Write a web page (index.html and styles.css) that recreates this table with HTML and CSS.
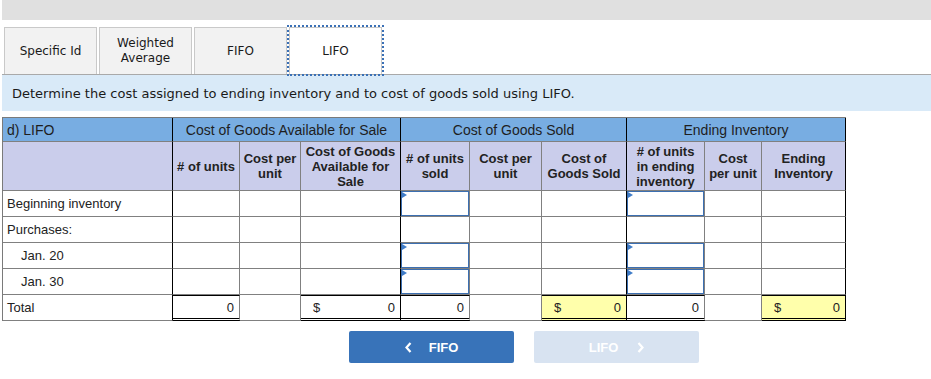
FILE: index.html
```html
<!DOCTYPE html>
<html lang="en">
<head>
<meta charset="utf-8">
<title>Inventory costing – LIFO</title>
<link rel="stylesheet" href="styles.css">
</head>
<body>
<div class="page">
  <div class="topbar"></div>

  <div class="tabs">
    <div class="tab">Specific Id</div>
    <div class="tab">Weighted<br>Average</div>
    <div class="tab">FIFO</div>
    <div class="tab active">LIFO</div>
  </div>

  <div class="prompt">Determine the cost assigned to ending inventory and to cost of goods sold using LIFO.</div>

  <table class="grid">
    <colgroup>
      <col class="c-label">
      <col class="c-67"><col class="c-61"><col class="c-100">
      <col class="c-69"><col class="c-72"><col class="c-85">
      <col class="c-78"><col class="c-57"><col class="c-84">
    </colgroup>
    <thead>
      <tr class="h1">
        <th class="lbl gend">d) LIFO</th>
        <th colspan="3" class="gend">Cost of Goods Available for Sale</th>
        <th colspan="3" class="gend">Cost of Goods Sold</th>
        <th colspan="3" class="gend">Ending Inventory</th>
      </tr>
      <tr class="h2">
        <th class="gend"></th>
        <th># of units</th>
        <th>Cost per<br>unit</th>
        <th class="gend">Cost of Goods<br>Available for<br>Sale</th>
        <th># of units<br>sold</th>
        <th>Cost per<br>unit</th>
        <th class="gend">Cost of<br>Goods Sold</th>
        <th># of units<br>in ending<br>inventory</th>
        <th>Cost<br>per unit</th>
        <th class="gend">Ending<br>Inventory</th>
      </tr>
    </thead>
    <tbody>
      <tr>
        <td class="lbl gend">Beginning inventory</td>
        <td></td><td></td><td class="gend"></td>
        <td class="ic"><div class="inp"></div></td><td></td><td class="gend"></td>
        <td class="ic"><div class="inp"></div></td><td></td><td class="gend"></td>
      </tr>
      <tr>
        <td class="lbl gend">Purchases:</td>
        <td></td><td></td><td class="gend"></td>
        <td></td><td></td><td class="gend"></td>
        <td></td><td></td><td class="gend"></td>
      </tr>
      <tr>
        <td class="lbl sub gend">Jan. 20</td>
        <td></td><td></td><td class="gend"></td>
        <td class="ic"><div class="inp"></div></td><td></td><td class="gend"></td>
        <td class="ic"><div class="inp"></div></td><td></td><td class="gend"></td>
      </tr>
      <tr>
        <td class="lbl sub gend">Jan. 30</td>
        <td></td><td></td><td class="gend"></td>
        <td class="ic"><div class="inp"></div></td><td></td><td class="gend"></td>
        <td class="ic"><div class="inp"></div></td><td></td><td class="gend"></td>
      </tr>
      <tr class="total">
        <td class="lbl gend">Total</td>
        <td class="val num">0</td>
        <td></td>
        <td class="val gend"><span class="money"><span>$</span><span>0</span></span></td>
        <td class="val num">0</td>
        <td></td>
        <td class="val hl gend"><span class="money"><span>$</span><span>0</span></span></td>
        <td class="val num">0</td>
        <td></td>
        <td class="val hl gend"><span class="money"><span>$</span><span>0</span></span></td>
      </tr>
    </tbody>
  </table>

  <div class="nav">
    <button class="btn prev" type="button">
      <svg class="chev" width="7" height="11" viewBox="0 0 7 11"><polyline points="5.5,1 1.5,5.5 5.5,10" fill="none" stroke="#fff" stroke-width="2.2"/></svg>
      <span>FIFO</span>
    </button>
    <button class="btn next" type="button" disabled>
      <span>LIFO</span>
      <svg class="chev" width="7" height="11" viewBox="0 0 7 11"><polyline points="1.5,1 5.5,5.5 1.5,10" fill="none" stroke="#fff" stroke-width="2.2"/></svg>
    </button>
  </div>
</div>
</body>
</html>
```

FILE: styles.css
```css
* { box-sizing: border-box; }

body {
  margin: 0;
  background: #fff;
  color: #1b1b1b;
  font-family: "DejaVu Sans", Verdana, sans-serif;
}

.page {
  padding-left: 2px;
}

.topbar {
  height: 20px;
  background: #e0e0e0;
  margin-bottom: 7px;
}

/* tab strip */
.tabs {
  display: flex;
  gap: 2px;
  padding-left: 2px;
  border-bottom: 1px solid #a9a9a9;
}

.tab {
  width: 93px;
  height: 47px;
  display: flex;
  align-items: center;
  justify-content: center;
  text-align: center;
  font-size: 12px;
  line-height: 15px;
  background: #f2f2f2;
  border: 1px solid #c9c9c9;
  border-bottom: none;
  color: #1a1a1a;
}

.tab.active {
  background: #fff;
  outline: 2px dotted #3a70b6;
  outline-offset: 0;
}

.prompt {
  background: #d9eaf8;
  height: 36px;
  display: flex;
  align-items: center;
  padding-left: 10px;
  font-size: 13px;
  color: #1a1a1a;
  margin-bottom: 6px;
}

/* worksheet table */
.grid {
  border-collapse: separate;
  border-spacing: 0;
  table-layout: fixed;
  width: 843px;
  font-family: "Liberation Sans", Arial, sans-serif;
  border-top: 1px solid #7a7a7a;
  border-left: 1px solid #7a7a7a;
}

.c-label { width: 170px; }
.c-67 { width: 67px; }
.c-61 { width: 61px; }
.c-100 { width: 100px; }
.c-69 { width: 69px; }
.c-72 { width: 72px; }
.c-85 { width: 85px; }
.c-78 { width: 78px; }
.c-57 { width: 57px; }
.c-84 { width: 84px; }

.grid th,
.grid td {
  padding: 0;
  border-right: 1px solid #808080;
  border-bottom: 1px solid #808080;
}

.grid .gend { border-right-color: #000; }

.h1 th {
  background: #78ade2;
  height: 24px;
  font-size: 14px;
  font-weight: normal;
  color: #1e1e1e;
  text-align: center;
}

.h1 th.lbl {
  text-align: left;
  padding-left: 4px;
}

.h2 th {
  background: #cacdeb;
  height: 49px;
  font-size: 13px;
  font-weight: bold;
  line-height: 15px;
  color: #222;
  text-align: center;
}

.grid tbody td {
  height: 26px;
  font-size: 13px;
  color: #222;
}

.grid td.lbl { padding-left: 4px; }
.grid td.sub { padding-left: 18px; }

.grid td.ic { position: relative; }

.inp {
  height: 25px;
  border: 1px solid #3c6fb1;
  position: relative;
  background: #fff;
}

/* little entry flag in the upper-left corner */
.inp::before {
  content: "";
  position: absolute;
  top: 0;
  left: 0;
  border-left: 5px solid #3f7cc8;
  border-top: 3px solid transparent;
  border-bottom: 3px solid transparent;
}

.total td.val {
  border-top: 1px solid #000;
  border-bottom: 3px double #000;
}

.total td { height: 27px; }

.total td.num {
  text-align: right;
  padding-right: 5px;
}

.money {
  display: flex;
  justify-content: space-between;
  padding: 0 5px 0 12px;
}

.total td.hl { background: #ffffab; }

/* navigation buttons */
.nav {
  display: flex;
  gap: 20px;
  padding-left: 347px;
  margin-top: 10px;
}

.btn {
  width: 165px;
  height: 32px;
  border: none;
  border-radius: 2px;
  display: flex;
  align-items: center;
  justify-content: center;
  gap: 17px;
  font-family: "Liberation Sans", Arial, sans-serif;
  font-weight: bold;
  font-size: 13px;
  color: #fff;
  padding: 0;
}

.btn.prev { background: #3873b9; }

.btn.next {
  background: #d8e3f1;
  color: #fff;
  gap: 19px;
}

.chev { display: block; }
```
